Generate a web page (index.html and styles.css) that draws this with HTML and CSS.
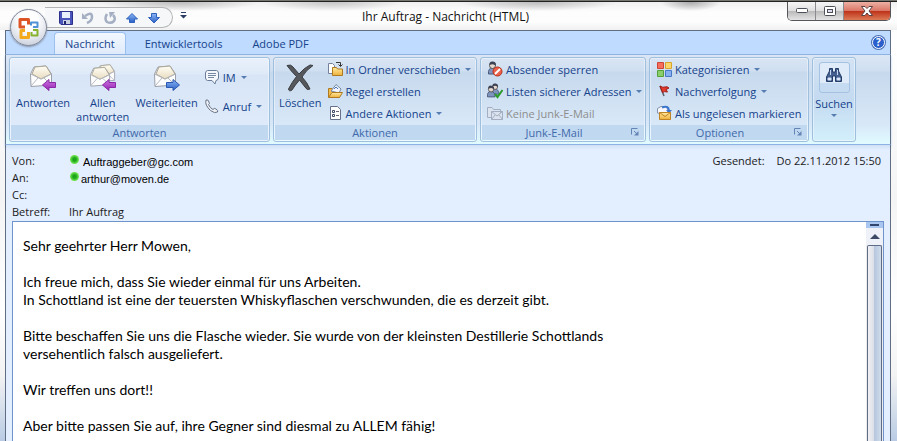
FILE: index.html
```html
<!doctype html>
<html lang="de">
    <head>
        <meta charset="utf-8">
        <title>Ihr Auftrag - Nachricht (HTML)</title>
        <link rel="stylesheet" href="styles.css">
    </head>
    <body>
        <!-- shapes that are used more than once -->
        <svg class="defs" aria-hidden="true">
            <defs>
                <linearGradient id="paper" x1="0" y1="0" x2="0" y2="1">
                    <stop offset="0" stop-color="#fffef5"/>
                    <stop offset="1" stop-color="#e9dcc0"/>
                </linearGradient>
                <linearGradient id="purple" x1="0" y1="0" x2="0" y2="1">
                    <stop offset="0" stop-color="#cf74e0"/>
                    <stop offset="1" stop-color="#9425b4"/>
                </linearGradient>
                <linearGradient id="blue" x1="0" y1="0" x2="0" y2="1">
                    <stop offset="0" stop-color="#8db8f5"/>
                    <stop offset="1" stop-color="#285fc4"/>
                </linearGradient>
                <linearGradient id="folder" x1="0" y1="0" x2="0" y2="1">
                    <stop offset="0" stop-color="#ffeaa0"/>
                    <stop offset="1" stop-color="#eeb03a"/>
                </linearGradient>
                <symbol id="envelope" viewBox="0 0 24 22">
                    <path d="M1.500 9 L5 2 L17 1 L22.500 9 V20 L2 21.500 Z" fill="#fdfdfe" stroke="#9a9ea8"/>
                    <path d="M3 9 L6 2 L17 1 L22 9 L12 14 Z" fill="url(#paper)" stroke="#aaa594"/>
                    <path d="M1.500 9 L12 14 L22.500 9 M2 21 L9 13 M22 20 L15 13" fill="none" stroke="#b4b8c0"/>
                </symbol>
                <symbol id="arrow" viewBox="0 0 14 12">
                    <path d="M.5 6 L7 .5 V3.500 H13.500 V8.500 H7 V11.500 Z"/>
                </symbol>
                <symbol id="launcher" viewBox="0 0 8 8">
                    <path d="M.5 6.500 V.5 H6.500" fill="none" stroke="#6484b4"/>
                    <path d="M3 3 L6 6" stroke="#6484b4"/>
                    <path d="M7.500 3 V7.500 H3 Z" fill="#6484b4"/>
                </symbol>
                <symbol id="person" viewBox="0 0 10 14">
                    <path d="M.5 13 Q0 7 4 7 Q9 7 9 13 Z" fill="#7e93bd" stroke="#49597b"/>
                    <circle cx="4.500" cy="4.500" r="3" fill="#e7d8cf" stroke="#555"/>
                    <path d="M1.500 4 Q1 0 5 .5 Q9 1 7.500 5 Q6 2 1.500 4 Z" fill="#3c4252"/>
                </symbol>
            </defs>
        </svg>

        <div class="backdrop"></div>
        <div class="window">
            <header class="title-bar">
                <div class="title-left">
                    <div class="quick-access">
                        <button class="tool" aria-label="Speichern">
                            <svg width="14" height="14" viewBox="0 0 14 14">
                                <path d="M.5 .5 H13.500 V13.500 H2 L.5 12 Z" fill="#4a55bb" stroke="#2c2f8c"/>
                                <path d="M3 1 H11 V7 H3 Z" fill="#e9f0fd"/>
                                <path d="M4 9 H11 V13 H4 Z" fill="#c9d0e4"/>
                                <path d="M5 10 H7 V13 H5 Z" fill="#20246b"/>
                            </svg>
                        </button>
                        <button class="tool" aria-label="Rückgängig">
                            <svg width="14" height="14" viewBox="0 0 14 14">
                                <path d="M4 5 Q11 0 11 6 Q11 10 6 12" fill="none" stroke="#a5afc3" stroke-width="2.500"/>
                                <path d="M1 2 V8 H7 Z" fill="#a5afc3"/>
                            </svg>
                        </button>
                        <button class="tool" aria-label="Wiederholen">
                            <svg width="14" height="14" viewBox="0 0 14 14">
                                <path d="M4 3 Q1 8 4 11 Q8 13 11 10 Q13 7 10 4" fill="none" stroke="#a5afc3" stroke-width="2.500"/>
                                <path d="M6 1 H12 L7 7 Z" fill="#a5afc3"/>
                            </svg>
                        </button>
                        <button class="tool" aria-label="Vorheriges Element">
                            <svg width="14" height="14" viewBox="0 0 14 14">
                                <path d="M7 2.500 L12.500 8 H9.500 V11.500 H4.500 V8 H1.500 Z" fill="url(#blue)" stroke="#2e62be"/>
                            </svg>
                        </button>
                        <button class="tool" aria-label="Nächstes Element">
                            <svg width="14" height="14" viewBox="0 0 14 14">
                                <path d="M7 12 L12.500 6.500 H9.500 V2.500 H4.500 V6.500 H1.500 Z" fill="url(#blue)" stroke="#2e62be"/>
                            </svg>
                        </button>
                    </div>
                    <button class="customize" aria-label="Symbolleiste anpassen">
                        <svg width="7" height="7" viewBox="0 0 7 7">
                            <path d="M1 0 H6 V1 H1 Z M0 3 H7 L3.500 6.500 Z" fill="#2d3e63"/>
                        </svg>
                    </button>
                </div>
                <h1 class="title">Ihr Auftrag - Nachricht (HTML)</h1>
                <div class="window-buttons">
                    <button class="win-btn" aria-label="Minimieren">
                        <svg width="12" height="6" viewBox="0 0 12 6">
                            <rect x=".5" y=".5" width="11" height="4" rx="1" fill="#fff" stroke="#4c5058"/>
                        </svg>
                    </button>
                    <button class="win-btn" aria-label="Maximieren">
                        <svg width="12" height="10" viewBox="0 0 12 10">
                            <rect x=".5" y=".5" width="11" height="9" rx="1" fill="#fff" stroke="#4c5058"/>
                            <rect x="3.500" y="3.500" width="5" height="3" fill="#dde" stroke="#4c5058"/>
                        </svg>
                    </button>
                    <button class="win-btn win-close" aria-label="Schließen">
                        <svg width="12" height="10" viewBox="0 0 12 10">
                            <path d="M.5 .5 H4 L6 2.500 L8 .5 H11.500 L8 5 L11.500 9.500 H8 L6 7 L4 9.500 H.5 L4 5 Z" fill="#fff" stroke="#5d4242"/>
                        </svg>
                    </button>
                </div>
            </header>

            <button class="office" aria-label="Office-Menü">
                <svg width="24" height="24" viewBox="0 0 24 24" fill="none" stroke-linejoin="round">
                    <path d="M14 9.500 V6.500 H20.500 V11 H16" stroke="#4f93d6" stroke-width="2"/>
                    <path d="M8 11 H3 V3.500 H11.500 V8.500" stroke="#dd5426" stroke-width="3"/>
                    <path d="M16 14 H20.500 V19.500 H14.500 V16" stroke="#86b32e" stroke-width="2"/>
                    <path d="M8 14.500 H4 V21.500 H11.500 V16" stroke="#f3a91c" stroke-width="3"/>
                </svg>
            </button>

            <nav class="tabs">
                <button class="tab active">Nachricht</button>
                <button class="tab">Entwicklertools</button>
                <button class="tab">Adobe PDF</button>
                <button class="help" aria-label="Hilfe">?</button>
            </nav>

            <div class="ribbon">
                <section class="group group-reply">
                    <div class="group-body">
                        <button class="big">
                            <svg width="30" height="28" viewBox="0 0 30 28">
                                <use href="#envelope" x="1" y="1" width="24" height="22"/>
                                <use href="#arrow" x="14" y="15" width="14" height="12" fill="url(#purple)" stroke="#8a2aa6"/>
                            </svg>
                            <span>Antworten</span>
                        </button>
                        <button class="big">
                            <svg width="30" height="28" viewBox="0 0 30 28">
                                <use href="#envelope" x="7" y="0" width="22" height="18"/>
                                <use href="#envelope" x="1" y="2" width="22" height="21"/>
                                <use href="#arrow" x="14" y="15" width="14" height="12" fill="url(#purple)" stroke="#8a2aa6"/>
                            </svg>
                            <span>Allen<br>antworten</span>
                        </button>
                        <button class="big">
                            <svg width="30" height="28" viewBox="0 0 30 28">
                                <use href="#envelope" x="1" y="1" width="24" height="22"/>
                                <path d="M27.500 21 L21 15.500 V18.500 H14.500 V23.500 H21 V26.500 Z" fill="url(#blue)" stroke="#2b58b0"/>
                            </svg>
                            <span>Weiterleiten</span>
                        </button>
                        <div class="rows rows-wide">
                            <button class="row drop">
                                <svg width="16" height="16" viewBox="0 0 16 16">
                                    <path d="M3.500 1.500 H12.500 Q14.500 2 14.500 4 V9 Q14 11.500 12 11.500 L11 15 L8 11.500 H3.500 Q1.500 11 1.500 9 V4 Q1.500 2 3.500 1.500 Z" fill="#f4f7fb" stroke="#6b7d98"/>
                                    <path d="M4 4.500 H12 M4 6.500 H12 M4 8.500 H10" stroke="#7788a2"/>
                                </svg>
                                <span>IM</span>
                            </button>
                            <button class="row drop">
                                <svg width="16" height="16" viewBox="0 0 16 16">
                                    <path d="M2 2 Q4 1 5 4 Q6 6 4.500 6.500 Q6 10 9 11.500 Q10 9.500 12 11 Q14.500 12.500 13.500 14 Q11 16 6.500 12.500 Q.5 7 2 2 Z" fill="#eef0f3" stroke="#687488"/>
                                </svg>
                                <span>Anruf</span>
                            </button>
                        </div>
                    </div>
                    <h2 class="caption">Antworten</h2>
                </section>

                <section class="group group-actions">
                    <div class="group-body">
                        <button class="big">
                            <svg width="30" height="28" viewBox="0 0 30 28">
                                <path d="M2 1.500 Q6 0 8 3 L14 10 Q19 4 25 1 L28 1.500 Q21 6 17 13 Q22 18 25 25 Q22 27 20 23 L14.500 16 Q10 21 7 26 Q4 28 3.500 25 Q7 18 11.500 12.500 Q6 7 2 1.500 Z" fill="#55585c" stroke="#3a3d41"/>
                            </svg>
                            <span>Löschen</span>
                        </button>
                        <div class="rows">
                            <button class="row drop">
                                <svg width="16" height="16" viewBox="0 0 16 16">
                                    <path d="M1.500 2.500 H5.500 L7.500 4.500 V12.500 H1.500 Z" fill="#fff" stroke="#75819a"/>
                                    <path d="M9 1.500 H13.500 V5 M11.500 3.500 L13.500 5.500 L15.500 3.500" fill="none" stroke="#333"/>
                                    <path d="M5.500 14.500 V6.500 H9.500 L10.500 8 H15.500 V14.500 Z" fill="url(#folder)" stroke="#b07b20"/>
                                </svg>
                                <span>In Ordner verschieben</span>
                            </button>
                            <button class="row">
                                <svg width="16" height="16" viewBox="0 0 16 16">
                                    <path d="M1.500 14 V5.500 H5 L6.500 7 H12.500 V14 Z" fill="#f2bd4c" stroke="#b07b20"/>
                                    <path d="M4 8 L9 1.500 L14 6 L12 10 Z" fill="#f2f6fc" stroke="#7888a4"/>
                                    <path d="M7 6 L9 4 L11 6" fill="none" stroke="#4778c6"/>
                                    <path d="M1.500 14.500 L5 9.500 H15.500 L12.500 14.500 Z" fill="url(#folder)" stroke="#b07b20"/>
                                </svg>
                                <span>Regel erstellen</span>
                            </button>
                            <button class="row drop">
                                <svg width="16" height="16" viewBox="0 0 16 16">
                                    <path d="M3.500 1.500 H10.500 L13.500 4.500 V14.500 H3.500 Z" fill="#fff" stroke="#66728c"/>
                                    <path d="M9 6.500 H12 M9 10.500 H12" stroke="#667"/>
                                    <path d="M5.500 5.500 H7.500 V7.500 H5.500 Z M5.500 9.500 H7.500 V11.500 H5.500 Z" fill="none" stroke="#3d4a66"/>
                                </svg>
                                <span>Andere Aktionen</span>
                            </button>
                        </div>
                    </div>
                    <h2 class="caption">Aktionen</h2>
                </section>

                <section class="group group-junk">
                    <div class="group-body">
                        <div class="rows">
                            <button class="row">
                                <svg width="16" height="16" viewBox="0 0 16 16">
                                    <use href="#person" x="1" y="0" width="10" height="14"/>
                                    <circle cx="10.500" cy="10.500" r="4.500" fill="#ea6249" stroke="#b92e19"/>
                                    <path d="M8 13 L13 8" stroke="#fff" stroke-width="2"/>
                                </svg>
                                <span>Absender sperren</span>
                            </button>
                            <button class="row drop">
                                <svg width="16" height="16" viewBox="0 0 16 16">
                                    <use href="#person" x="4" y="0" width="9" height="12"/>
                                    <use href="#person" x="0" y="2" width="9" height="13"/>
                                    <path d="M8 11 L10.500 14 L15.500 7" fill="none" stroke="#2c9b2c" stroke-width="2"/>
                                </svg>
                                <span>Listen sicherer Adressen</span>
                            </button>
                            <button class="row" disabled>
                                <svg width="16" height="16" viewBox="0 0 16 16" fill="#dbe3ef" stroke="#a3aec2">
                                    <path d="M.5 12.500 V2.500 H5 L6.500 4.500 H13.500 V12.500 Z"/>
                                    <path d="M4.500 6.500 H15.500 V14.500 H4.500 Z M4.500 6.500 L10 11 L15.500 6.500 M4.500 14.500 L8 10 M15.500 14.500 L12 10"/>
                                </svg>
                                <span>Keine Junk-E-Mail</span>
                            </button>
                        </div>
                    </div>
                    <h2 class="caption has-launcher">Junk-E-Mail
                        <svg class="launcher" width="8" height="8"><use href="#launcher"/></svg>
                    </h2>
                </section>

                <section class="group group-options">
                    <div class="group-body">
                        <div class="rows">
                            <button class="row drop">
                                <svg width="16" height="16" viewBox="0 0 16 16">
                                    <path d="M1.500 1.500 H7.500 V7.500 H1.500 Z" fill="#f4705c" stroke="#cf4534"/>
                                    <path d="M9.500 1.500 H15.500 V7.500 H9.500 Z" fill="#fbd66a" stroke="#d8a42c"/>
                                    <path d="M1.500 9.500 H7.500 V15.500 H1.500 Z" fill="#8bcf6c" stroke="#55a038"/>
                                    <path d="M9.500 9.500 H15.500 V15.500 H9.500 Z" fill="#86b0f0" stroke="#4878c6"/>
                                </svg>
                                <span>Kategorisieren</span>
                            </button>
                            <button class="row drop">
                                <svg width="16" height="16" viewBox="0 0 16 16">
                                    <path d="M4 3 L8 13" stroke="#5c5c66" stroke-width="1.500"/>
                                    <path d="M4 3 Q7 5 9 4 Q11 3 13 5 L10 6.500 L11.500 9 Q8 8 6.500 9.500 Z" fill="#e33a2c" stroke="#a01e18"/>
                                </svg>
                                <span>Nachverfolgung</span>
                            </button>
                            <button class="row">
                                <svg width="16" height="16" viewBox="0 0 16 16">
                                    <path d="M1.500 8 V3.500 L5 1.500 H10 L12 5 V10 Z" fill="#f6f8fd" stroke="#8492ac"/>
                                    <path d="M6 2.500 Q12.500 0 13 5.500" fill="none" stroke="#3d76cd" stroke-width="2"/>
                                    <path d="M10 5 H16 L13 8.500 Z" fill="#3d76cd"/>
                                    <path d="M3.500 7.500 H14.500 V14.500 H3.500 Z" fill="url(#folder)" stroke="#c08422"/>
                                    <path d="M3.500 7.500 L9 11.500 L14.500 7.500" fill="none" stroke="#c08422"/>
                                </svg>
                                <span>Als ungelesen markieren</span>
                            </button>
                        </div>
                    </div>
                    <h2 class="caption has-launcher">Optionen
                        <svg class="launcher" width="8" height="8"><use href="#launcher"/></svg>
                    </h2>
                </section>

                <button class="group group-search">
                    <span class="search-icon">
                        <svg width="16" height="14" viewBox="0 0 16 14">
                            <path d="M3.500 .5 H6.500 V4 H9.500 V.5 H12.500 V3 L15.500 9 V13.500 H9.500 V8 H6.500 V13.500 H.5 V9 L3.500 3 Z" fill="#44608f" stroke="#243c68"/>
                            <path d="M2 10 H5 V12 H2 Z M11 10 H14 V12 H11 Z M4.500 2 V7 M11.500 2 V7" fill="#fff" stroke="#c5d6ee"/>
                        </svg>
                    </span>
                    <span>Suchen</span>
                    <span class="caret"></span>
                </button>
            </div>

            <div class="mail-head">
                <dl class="fields">
                    <dt>Von:</dt>
                    <dd class="address sender"><i class="online"></i>Auftraggeber@gc.com</dd>
                    <dt>An:</dt>
                    <dd class="address"><i class="online"></i>arthur@moven.de</dd>
                    <dt>Cc:</dt>
                    <dd></dd>
                    <dt>Betreff:</dt>
                    <dd>Ihr Auftrag</dd>
                </dl>
                <p class="sent"><span>Gesendet:</span><span>Do 22.11.2012 15:50</span></p>
            </div>

            <main class="message">
                <article class="mail-text">
                    <p>Sehr geehrter Herr Mowen,</p>
                    <p>Ich freue mich, dass Sie wieder einmal für uns Arbeiten.<br>
                    In Schottland ist eine der teuersten Whiskyflaschen verschwunden, die es derzeit gibt.</p>
                    <p>Bitte beschaffen Sie uns die Flasche wieder. Sie wurde von der kleinsten Destillerie Schottlands<br>
                    versehentlich falsch ausgeliefert.</p>
                    <p>Wir treffen uns dort!!</p>
                    <p>Aber bitte passen Sie auf, ihre Gegner sind diesmal zu ALLEM fähig!</p>
                </article>
                <div class="scrollbar">
                    <div class="splitter"></div>
                    <button class="scroll-up" aria-label="Nach oben"></button>
                    <div class="thumb"></div>
                </div>
            </main>
        </div>
    </body>
</html>
```

FILE: styles.css
```css
* {
    box-sizing: border-box;
}

body {
    margin: 0;
    overflow: hidden;
    font-family: "Open Sans", "Noto Sans", sans-serif;
    font-size: 11px;
    color: #1a1a1a;
    background: linear-gradient(to bottom, #fafafa, #fff 10%, #f4f4f4 45%, #fff 70%, #f3f3f3 85%, #b9cbe4);
}

h1, h2, p, dl, dd {
    margin: 0;
    font-weight: normal;
}

button {
    padding: 0;
    border: none;
    background: none;
    font: inherit;
    color: inherit;
    cursor: pointer;
}

svg {
    display: block;
    flex: none;
}

.defs {
    position: absolute;
    width: 0;
    height: 0;
}

/* strip of the desktop above the window */
.backdrop {
    height: 2px;
    background: #77776f;
    border-bottom: 1px solid #222;
}

.window {
    position: relative;
    display: flex;
    flex-direction: column;
    height: calc(100vh - 2px);
    padding: 0 6px 0 5px;
}

/* TITLE BAR */
.title-bar {
    display: grid;
    grid-template-columns: 1fr auto 1fr;
    align-items: start;
    height: 28px;
    margin: 0 -6px 0 -5px;
    padding-right: 6px;
    background:
        radial-gradient(ellipse 80px 9px at 20% 0, #bbb, transparent),
        radial-gradient(ellipse 70px 9px at 37% 0, #c4c4c4, transparent),
        radial-gradient(ellipse 80px 9px at 60% 0, #bbb, transparent),
        radial-gradient(ellipse 30px 9px at 77% 0, #aaa, transparent),
        linear-gradient(to bottom, #f0f0f0, #fdfdfd 10px, #fdfdfd 20px, #f0f0f0);
}

.title-left {
    display: flex;
    padding-left: 45px;
}

.quick-access {
    display: flex;
    gap: 8px;
    align-items: center;
    width: 128px;
    height: 21px;
    margin-top: 5px;
    padding-left: 14px;
    border: 1px solid #b3b3b5;
    border-left: none;
    border-radius: 0 11px 11px 0;
    background: #f6f7f8;
}

.tool {
    width: 14px;
    height: 14px;
}

.customize {
    margin-left: 7px;
}

.title {
    padding-top: 6px;
    font-size: 12px;
    line-height: 17px;
    color: #111;
}

.window-buttons {
    display: flex;
    justify-self: end;
    overflow: hidden;
    border: 1px solid #55555a;
    border-top: none;
    border-radius: 0 0 5px 5px;
}

.win-btn {
    display: flex;
    align-items: center;
    justify-content: center;
    width: 28px;
    height: 18px;
    border-right: 1px solid #8b8b8f;
    background: linear-gradient(to bottom, #f6f6f6, #dedede 50%, #b9b9b9 50%, #e4e4e4);
}

.win-close {
    width: 46px;
    border-right: none;
    background: linear-gradient(to bottom, #edb0a4, #d97565 50%, #bd3018 50%, #dc7b56);
}

.office {
    position: absolute;
    left: 10px;
    top: 7px;
    display: flex;
    align-items: center;
    justify-content: center;
    width: 37px;
    height: 37px;
    border: 1px solid #7f8796;
    border-radius: 50%;
    background: radial-gradient(circle at 50% 30%, #fff 30%, #e4e7ee 60%, #b8c0d0);
    box-shadow: 0 1px 2px #8792a8;
}

/* TABS */
.tabs {
    display: flex;
    align-items: flex-end;
    height: 24px;
    padding-left: 48px;
    border: 1px solid #5f6d85;
    border-bottom: none;
    background: #bfdbff;
    color: #15428b;
}

.tab {
    height: 22px;
    padding: 0 10px;
    margin-right: 8px;
    border: 1px solid transparent;
    border-bottom: none;
    border-radius: 4px 4px 0 0;
}

.active {
    border-color: #9cc0ee;
    background: linear-gradient(to bottom, #f2f8ff, #dfeafa);
}

.help {
    align-self: center;
    width: 13px;
    height: 13px;
    margin: 0 5px 0 auto;
    border: 1px solid #fff;
    border-radius: 50%;
    background: #2a5fcc;
    box-shadow: 0 0 0 1px #4a70b5;
    font-size: 10px;
    line-height: 11px;
    font-weight: bold;
    color: #fff;
}

/* RIBBON */
.ribbon {
    display: flex;
    gap: 3px;
    height: 91px;
    padding: 2px 3px;
    border: 1px solid #8db2e3;
    border-left-color: #5f6d85;
    border-right-color: #5f6d85;
    background: linear-gradient(to bottom, #dbe6f4, #cfdff1 16px, #c7d9ed 17px, #d8e8f8 70px, #e0fbff);
    color: #15428b;
    box-shadow: 0 2px 2px #b4cfef;
}

.group {
    display: flex;
    flex-direction: column;
    border: 1px solid #9fbfdf;
    border-radius: 3px;
    box-shadow: inset 0 0 0 1px rgba(255, 255, 255, 0.4);
    white-space: nowrap;
}

.group-body {
    display: flex;
    flex: 1;
    padding-left: 3px;
}

.group-reply {
    width: 261px;
    background: linear-gradient(to bottom, #e9f1fb, #dfeaf8 16px, #d8e5f6 17px, #e0ecfb);
}

.group-reply .group-body {
    gap: 6px;
    padding-left: 6px;
}

.group-actions {
    width: 204px;
}

.group-actions .group-body {
    padding-left: 5px;
}

.group-junk {
    width: 166px;
}

.group-options {
    width: 160px;
}

.caption {
    position: relative;
    height: 15px;
    margin: 0 1px 1px;
    background: #c1d8f1;
    font-size: 11px;
    line-height: 15px;
    text-align: center;
    color: #3e6aaa;
}

.has-launcher {
    padding-right: 18px;
}

.launcher {
    position: absolute;
    right: 5px;
    top: 3px;
}

.big {
    display: flex;
    flex-direction: column;
    align-items: center;
    padding-top: 6px;
    line-height: 14px;
}

.big span {
    margin-top: 4px;
}

.rows {
    display: flex;
    flex-direction: column;
    padding-left: 3px;
}

.rows-wide {
    gap: 7px;
    padding: 8px 0 0;
}

.group-actions .rows {
    padding-left: 5px;
}

.row {
    display: flex;
    align-items: center;
    gap: 3px;
    height: 22px;
}

.row:disabled {
    color: #8d8d8d;
    cursor: default;
}

.drop::after,
.caret {
    content: "";
    width: 0;
    border: 3px solid transparent;
    border-top-color: #567db1;
    border-bottom: none;
}

.drop::after {
    margin-left: 2px;
}

.group-search {
    align-items: center;
    width: 44px;
    background: linear-gradient(to bottom, #d3e3f4, #c4daf0 50%, #d3effb);
}

.search-icon {
    display: flex;
    justify-content: center;
    width: 31px;
    height: 31px;
    margin: 4px 0 3px;
    padding-top: 5px;
    border: 1px solid #a5c2e2;
    border-radius: 3px;
    background: linear-gradient(to bottom, #dfebf8 70%, #c5dbf2 70%);
}

.caret {
    margin-top: 3px;
}

/* MAIL HEADER */
.mail-head {
    display: flex;
    justify-content: space-between;
    height: 76px;
    padding: 7px 9px 0 6px;
    border: 1px solid #5f6d85;
    border-top: none;
    border-bottom: none;
    background: linear-gradient(to bottom, #cfe0f5, #e3eeff 5px);
}

.fields {
    display: grid;
    grid-template-columns: 57px auto;
    grid-auto-rows: 17px;
    line-height: 17px;
}

.address {
    display: flex;
    gap: 2px;
    font-family: "Liberation Sans", sans-serif;
    font-size: 11px;
    line-height: 21px;
    color: #000;
}

.sender {
    gap: 4px;
}

.online {
    width: 9px;
    height: 9px;
    margin: 3px 0 0 1px;
    border-radius: 50%;
    background: radial-gradient(circle, #1da51d 25%, #63dd45 60%, #b1f29b);
}

.sent {
    display: flex;
    gap: 12px;
    line-height: 17px;
}

/* MESSAGE */
.message {
    display: flex;
    flex: 1;
    min-height: 0;
    padding: 0 6px;
    border: 1px solid #5f6d85;
    border-top: none;
    border-bottom: none;
    background: #e3eeff;
}

.mail-text {
    flex: 1;
    padding: 15px 10px;
    border: 1px solid #6f93cb;
    border-right: none;
    border-bottom: none;
    background: #fff;
    font-family: Lato, sans-serif;
    font-size: 14px;
    line-height: 18px;
    color: #000;
}

.mail-text p {
    margin-bottom: 18px;
}

.scrollbar {
    display: flex;
    flex-direction: column;
    width: 18px;
    border: 1px solid #6f93cb;
    border-left: none;
    border-bottom: none;
    background: #ececef;
}

.splitter {
    height: 6px;
    border: solid #a9c6f0;
    border-width: 2px 4px;
    background: #30466e;
}

.scroll-up {
    height: 17px;
    background: #eef1f7;
}

.scroll-up::before {
    content: "";
    display: block;
    width: 0;
    margin: 0 auto;
    border: 5px solid transparent;
    border-bottom-color: #3c4a68;
    border-top: none;
}

.thumb {
    flex: 1;
    margin: 0 1px;
    border: 1px solid #5f6c85;
    border-bottom: none;
    border-radius: 2px 2px 0 0;
    background: linear-gradient(to right, #f1f1f5, #dcdfe8 45%, #b7c7de 50%, #cfdcec);
}
```
